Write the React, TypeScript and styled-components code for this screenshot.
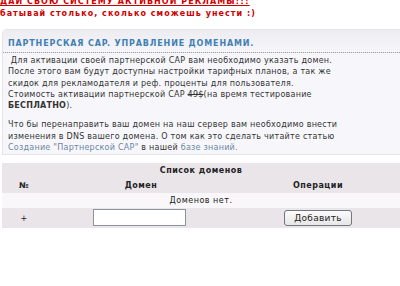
import React from 'react';
import styled, { createGlobalStyle } from 'styled-components';

const GlobalStyle = createGlobalStyle`
  html, body {
    margin: 0;
    padding: 0;
    background: #ffffff;
    overflow: hidden;
  }
  body {
    font-family: 'DejaVu Sans', Verdana, sans-serif;
    font-size: 8px;
    color: #333;
  }
`;

const Page = styled.div`
  width: 400px;
  height: 286px;
  overflow: hidden;
`;

const Promo = styled.div`
  margin-top: -4px;
  color: #cc0000;
  font-weight: 700;
  font-size: 8px;
  letter-spacing: 1.05px;
  line-height: 12px;
`;

const PromoLine = styled.div<{ $underline?: boolean }>`
  white-space: nowrap;
  text-decoration: ${(p) => (p.$underline ? 'underline' : 'none')};
  text-transform: ${(p) => (p.$underline ? 'uppercase' : 'none')};
`;

const Panel = styled.div`
  margin: 9px 0 0 2px;
  border: 1px solid #e4e4ea;
  border-right: none;
  border-radius: 5px 0 0 0;
  background: #f7f7fb;
`;

const PanelHead = styled.div`
  height: 22px;
  padding: 0 5px;
  display: flex;
  align-items: flex-end;
  background: linear-gradient(#ececf1, #f6f6fa);
  border-bottom: 1px dotted #9a9aa2;
`;

const PanelTitle = styled.div`
  color: #3f80b3;
  font-weight: 700;
  font-size: 8px;
  letter-spacing: 0.85px;
  padding-bottom: 4px;
`;

const PanelBody = styled.div`
  padding: 2px 5px 1px 5px;
  line-height: 11.3px;
  letter-spacing: 0.25px;
  color: #333;
`;

const Para = styled.p`
  margin: 0 0 8px 0;
  &:last-child {
    margin-bottom: 0;
  }
`;

const Old = styled.span`
  text-decoration: line-through;
`;

const Link = styled.a`
  color: #6a86a4;
  text-decoration: none;
`;

const DomainTable = styled.table`
  margin: 8px 0 0 2px;
  width: 398px;
  border-collapse: collapse;
  background: #e9e5e9;
  letter-spacing: 0.5px;
  color: #222;
`;

const Row = styled.tr<{ $light?: boolean }>`
  background: ${(p) => (p.$light ? '#f9f7f9' : 'transparent')};
`;

const HeadCell = styled.th<{ $w?: number }>`
  height: 15px;
  padding: 0;
  font-weight: 700;
  text-align: center;
  width: ${(p) => (p.$w ? `${p.$w}px` : 'auto')};
`;

const Cell = styled.td`
  height: 15px;
  padding: 0;
  text-align: center;
`;

const DomainInput = styled.input`
  box-sizing: border-box;
  width: 93px;
  height: 17px;
  border: 1px solid #8a949e;
  background: #fff;
  margin: 1px 4px 2px 0;
  vertical-align: middle;
`;

const AddButton = styled.button`
  box-sizing: border-box;
  height: 16px;
  width: 68px;
  padding: 0;
  border: 1px solid #6f7780;
  border-radius: 3px;
  background: linear-gradient(#fbfbfb, #e6e6e6);
  font-family: 'DejaVu Sans', Verdana, sans-serif;
  font-size: 9px;
  color: #222;
  letter-spacing: 0.3px;
  vertical-align: middle;
`;

export default function App() {
  return (
    <Page>
      <GlobalStyle />
      <Promo>
        <PromoLine $underline>дай свою систему активной рекламы!!!</PromoLine>
        <PromoLine>батывай столько, сколько сможешь унести :)</PromoLine>
      </Promo>
      <Panel>
        <PanelHead>
          <PanelTitle>ПАРТНЕРСКАЯ CAP. УПРАВЛЕНИЕ ДОМЕНАМИ.</PanelTitle>
        </PanelHead>
        <PanelBody>
          <Para>
            &nbsp;Для активации своей партнерской CAP вам необходимо указать домен.
            <br />
            После этого вам будут доступны настройки тарифных планов, а так же
            <br />
            скидок для рекламодателя и реф. проценты для пользователя.
            <br />
            Стоимость активации партнерской CAP <Old>49$</Old>(на время тестирование
            <br />
            <b>БЕСПЛАТНО</b>).
          </Para>
          <Para>
            Что бы перенаправить ваш домен на наш сервер вам необходимо внести
            <br />
            изменения в DNS вашего домена. О том как это сделать читайте статью
            <br />
            <Link>Создание "Партнерской CAP"</Link> в нашей <Link>базе знаний.</Link>
          </Para>
        </PanelBody>
      </Panel>
      <DomainTable>
        <tbody>
          <tr>
            <HeadCell colSpan={3}>Список доменов</HeadCell>
          </tr>
          <tr>
            <HeadCell $w={44}>№</HeadCell>
            <HeadCell $w={190}>Домен</HeadCell>
            <HeadCell>Операции</HeadCell>
          </tr>
          <Row $light>
            <Cell colSpan={3}>Доменов нет.</Cell>
          </Row>
          <tr>
            <Cell>+</Cell>
            <Cell>
              <DomainInput type="text" />
            </Cell>
            <Cell>
              <AddButton type="button">Добавить</AddButton>
            </Cell>
          </tr>
        </tbody>
      </DomainTable>
    </Page>
  );
}
